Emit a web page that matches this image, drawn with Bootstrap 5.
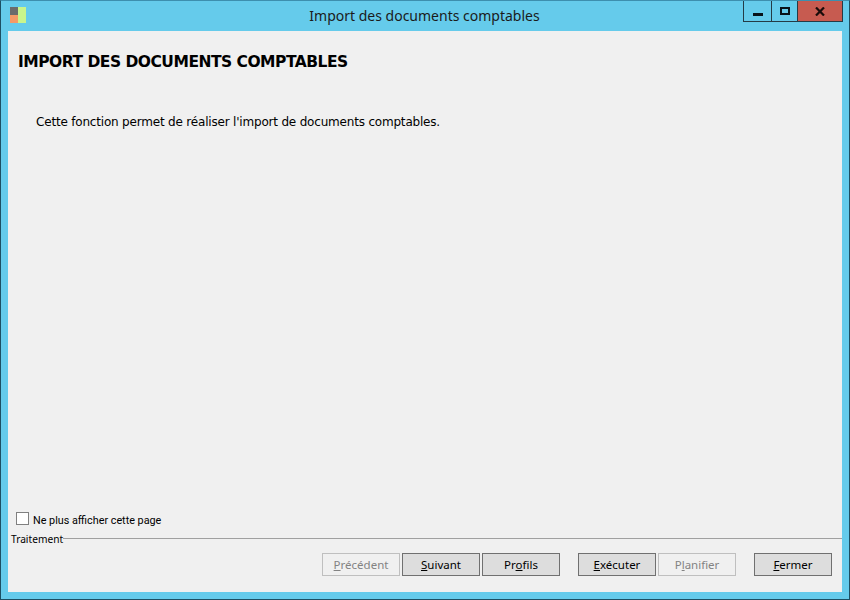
<!DOCTYPE html>
<html lang="fr">
<head>
    <meta charset="UTF-8">
    <title>Import des documents comptables</title>
    <link href="https://cdn.jsdelivr.net/npm/bootstrap@5.3.0/dist/css/bootstrap.min.css" rel="stylesheet">
    <style>
        html, body { height: 100%; margin: 0; overflow: hidden; }
        body { background: #65cbeb; font-family: "Noto Sans", sans-serif; color: #000; }
        .win-frame { width: 850px; height: 600px; border: 1px solid #1d4f63; border-top-color: #3d8fae; padding: 0 7px 7px; background: #65cbeb; }
        .win-titlebar { height: 30px; flex: none; }
        .win-logo { width: 16px; height: 16px; margin-top: 6px; margin-left: 2px; }
        .win-title { font-size: 14px; line-height: 30px; color: #1b1b1b; left: -1px; right: 0; top: 0; text-align: center; }
        .win-controls { height: 21px; border: 1px solid #243b46; border-top: 0; margin-right: -1px; }
        .win-btn { height: 20px; border-right: 1px solid #243b46; }
        .win-btn-min { width: 28px; }
        .win-btn-max { width: 26px; }
        .win-btn-close { width: 44px; border-right: 0; background: #c75b50; }
        .win-body { height: 561px; flex: none; background: #f0f0f0; }
        .page-heading { font-family: "DejaVu Sans", sans-serif; font-weight: 700; font-size: 15.5px; letter-spacing: -0.5px; line-height: 20px; padding: 21px 0 0 10px; margin: 0; }
        .page-text { font-family: "DejaVu Sans", sans-serif; font-size: 12px; letter-spacing: -0.19px; line-height: 16px; padding: 42px 0 0 28px; margin: 0; }
        .skip-check { padding-left: 8px; margin-bottom: 3px; font-family: Roboto, sans-serif; font-size: 10.8px; line-height: 17px; }
        .skip-box { width: 13px; height: 13px; background: #fff; border: 1px solid #808080; margin-right: 4px; }
        .section-label { font-size: 10.2px; line-height: 14px; padding-left: 3px; }
        .section-rule { height: 1px; background: #a0a0a0; margin-bottom: 1px; }
        .btn-win { width: 78px; height: 23px; padding: 0; border: 1px solid #707070; border-radius: 0; background: #dddddd; color: #000; font-size: 11.5px; line-height: 21px; }
        .btn-win:disabled { opacity: 1; border-color: #bfbfbf; background: #f0f0f0; color: #838383; }
        .btn-row { padding: 7px 10px 16px 0; }
        .btn-set { gap: 2px; }
        .btn-gap { margin-left: 18px; }
    </style>
</head>
<body>
    <div class="win-frame d-flex flex-column">
        <div class="win-titlebar d-flex justify-content-between position-relative">
            <svg class="win-logo" viewBox="0 0 16 16">
                <rect x="0" y="0" width="8" height="8" fill="#6b6b6b"/>
                <rect x="0" y="8" width="8" height="8" fill="#f59a66"/>
                <rect x="8" y="0" width="8" height="16" fill="#c9f58c"/>
            </svg>
            <div class="win-title position-absolute">Import des documents comptables</div>
            <div class="win-controls d-flex position-relative">
                <div class="win-btn win-btn-min d-flex align-items-center justify-content-center">
                    <svg width="12" height="10" viewBox="0 0 12 10"><rect x="1" y="7" width="10" height="3" fill="#08131a"/></svg>
                </div>
                <div class="win-btn win-btn-max d-flex align-items-center justify-content-center">
                    <svg width="12" height="10" viewBox="0 0 12 10"><rect x="2" y="2" width="8" height="6" fill="none" stroke="#08131a" stroke-width="2"/></svg>
                </div>
                <div class="win-btn win-btn-close d-flex align-items-center justify-content-center">
                    <svg width="10" height="9" viewBox="0 0 10 9"><path d="M1 0.5L9 8.5M9 0.5L1 8.5" stroke="#1a0c0a" stroke-width="2.2" fill="none"/></svg>
                </div>
            </div>
        </div>
        <div class="win-body d-flex flex-column">
            <h1 class="page-heading">IMPORT DES DOCUMENTS COMPTABLES</h1>
            <p class="page-text flex-grow-1">Cette fonction permet de réaliser l'import de documents comptables.</p>
            <div class="skip-check d-flex align-items-start">
                <span class="skip-box d-inline-block"></span>
                <span>Ne plus afficher cette page</span>
            </div>
            <div class="d-flex align-items-center">
                <span class="section-label">Traitement</span>
                <div class="section-rule flex-grow-1"></div>
            </div>
            <div class="btn-row d-flex justify-content-end">
                <div class="d-flex btn-set">
                    <button class="btn btn-win" disabled><u>P</u>récédent</button>
                    <button class="btn btn-win"><u>S</u>uivant</button>
                    <button class="btn btn-win">Pr<u>o</u>fils</button>
                </div>
                <div class="d-flex btn-set btn-gap">
                    <button class="btn btn-win"><u>E</u>xécuter</button>
                    <button class="btn btn-win" disabled>P<u>l</u>anifier</button>
                </div>
                <button class="btn btn-win btn-gap"><u>F</u>ermer</button>
            </div>
        </div>
    </div>
    <script src="https://cdn.jsdelivr.net/npm/bootstrap@5.3.0/dist/js/bootstrap.bundle.min.js"></script>
</body>
</html>
